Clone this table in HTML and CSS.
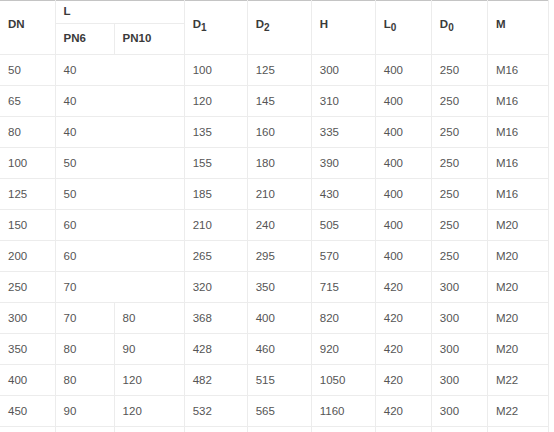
FILE: index.html
```html
<!DOCTYPE html>
<html>
<head>
<meta charset="utf-8">
<link rel="stylesheet" href="styles.css">
</head>
<body>
<table class="spec">
  <colgroup>
    <col class="c-dn"><col class="c-pn6"><col class="c-pn10"><col class="c-d1"><col class="c-d2"><col class="c-h"><col class="c-l0"><col class="c-d0"><col class="c-m">
  </colgroup>
  <thead>
    <tr class="h1">
      <th rowspan="2" class="mid">DN</th>
      <th colspan="2" class="top">L</th>
      <th rowspan="2" class="mid">D<sub>1</sub></th>
      <th rowspan="2" class="mid">D<sub>2</sub></th>
      <th rowspan="2" class="mid">H</th>
      <th rowspan="2" class="mid">L<sub>0</sub></th>
      <th rowspan="2" class="mid">D<sub>0</sub></th>
      <th rowspan="2" class="mid">M</th>
    </tr>
    <tr class="h2">
      <th>PN6</th>
      <th>PN10</th>
    </tr>
  </thead>
  <tbody>
    <tr><td>50</td><td colspan="2">40</td><td>100</td><td>125</td><td>300</td><td>400</td><td>250</td><td>M16</td></tr>
    <tr><td>65</td><td colspan="2">40</td><td>120</td><td>145</td><td>310</td><td>400</td><td>250</td><td>M16</td></tr>
    <tr><td>80</td><td colspan="2">40</td><td>135</td><td>160</td><td>335</td><td>400</td><td>250</td><td>M16</td></tr>
    <tr><td>100</td><td colspan="2">50</td><td>155</td><td>180</td><td>390</td><td>400</td><td>250</td><td>M16</td></tr>
    <tr><td>125</td><td colspan="2">50</td><td>185</td><td>210</td><td>430</td><td>400</td><td>250</td><td>M16</td></tr>
    <tr><td>150</td><td colspan="2">60</td><td>210</td><td>240</td><td>505</td><td>400</td><td>250</td><td>M20</td></tr>
    <tr><td>200</td><td colspan="2">60</td><td>265</td><td>295</td><td>570</td><td>400</td><td>250</td><td>M20</td></tr>
    <tr><td>250</td><td colspan="2">70</td><td>320</td><td>350</td><td>715</td><td>420</td><td>300</td><td>M20</td></tr>
    <tr><td>300</td><td>70</td><td>80</td><td>368</td><td>400</td><td>820</td><td>420</td><td>300</td><td>M20</td></tr>
    <tr><td>350</td><td>80</td><td>90</td><td>428</td><td>460</td><td>920</td><td>420</td><td>300</td><td>M20</td></tr>
    <tr><td>400</td><td>80</td><td>120</td><td>482</td><td>515</td><td>1050</td><td>420</td><td>300</td><td>M22</td></tr>
    <tr><td>450</td><td>90</td><td>120</td><td>532</td><td>565</td><td>1160</td><td>420</td><td>300</td><td>M22</td></tr>
    <tr><td>&nbsp;</td><td></td><td></td><td></td><td></td><td></td><td></td><td></td><td></td></tr>
  </tbody>
</table>
</body>
</html>
```

FILE: styles.css
```css
html, body {
  margin: 0;
  padding: 0;
  background: #ffffff;
}

.spec {
  border-collapse: collapse;
  table-layout: fixed;
  width: 549px;
  font-family: "Liberation Sans", Arial, sans-serif;
  font-size: 11.5px;
  color: #555555;
  border-top: 1px solid #c4c4c4;
}

.c-dn { width: 55px; }
.c-pn6 { width: 59px; }
.c-pn10 { width: 70px; }
.c-d1 { width: 63px; }
.c-d2 { width: 64px; }
.c-h { width: 64px; }
.c-l0 { width: 56px; }
.c-d0 { width: 56px; }
.c-m { width: 61px; }

.spec th,
.spec td {
  border: 1px solid #ececec;
  padding: 0 0 0 8px;
  text-align: left;
  line-height: 14px;
}

.spec th {
  font-weight: bold;
  color: #3a3a3a;
}

.spec tr:first-child th {
  border-top: none;
}

.spec th:first-child,
.spec td:first-child {
  border-left: none;
}

.h1 th.top {
  height: 23px;
  vertical-align: top;
  padding-top: 3px;
  box-sizing: border-box;
}

.h1 th.mid {
  vertical-align: middle;
  padding-bottom: 8px;
}

.h2 th {
  height: 31px;
  vertical-align: middle;
  padding-bottom: 2px;
  box-sizing: border-box;
}

.spec sub {
  font-size: 10px;
  line-height: 0;
  vertical-align: -3px;
}

.spec td {
  height: 30px;
  vertical-align: middle;
}
```
